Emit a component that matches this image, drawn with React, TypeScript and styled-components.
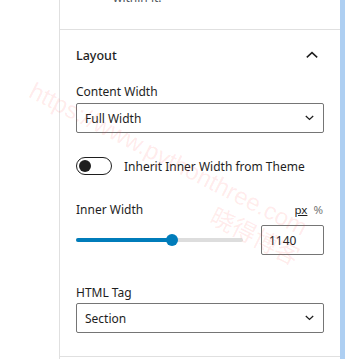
import React from "react";
import styled, { createGlobalStyle } from "styled-components";

const Global = createGlobalStyle`
  html, body { margin: 0; padding: 0; background: #fff; }
  body { font-family: "Noto Sans", "Liberation Sans", sans-serif; color: #1e1e1e; }
  * { box-sizing: border-box; }
`;

const Page = styled.div`
  position: relative;
  display: flex;
  width: 345px;
  height: 359px;
  overflow: hidden;
  background: #fff;
`;

const Gutter = styled.div`
  width: 59px;
  flex: none;
`;

const Panel = styled.div`
  width: 281px;
  flex: none;
  border-left: 1px solid #e0e0e0;
  display: flex;
  flex-direction: column;
`;

const Scroll = styled.div`
  width: 5px;
  flex: none;
  background: #aecff2;
`;

const TopSection = styled.div`
  height: 30px;
  border-bottom: 1px solid #e0e0e0;
  overflow: hidden;
  padding-left: 53px;
`;

const TopText = styled.div`
  font-size: 12px;
  line-height: 16px;
  margin-top: -10px;
  color: #50575e;
`;

const Section = styled.div`
  padding: 0 16px 23px 16px;
  border-bottom: 1px solid #e0e0e0;
  display: flex;
  flex-direction: column;
`;

const Header = styled.div`
  height: 50px;
  display: flex;
  align-items: center;
  justify-content: space-between;
  font-size: 12.5px;
  font-weight: 500;
`;

const Label = styled.div<{ $top: number; $bottom: number }>`
  font-size: 12px;
  line-height: 16px;
  margin-top: ${(p) => p.$top}px;
  margin-bottom: ${(p) => p.$bottom}px;
`;

const SelectBox = styled.div`
  height: 30px;
  border: 1px solid #757575;
  border-radius: 2px;
  display: flex;
  align-items: center;
  justify-content: space-between;
  padding: 0 9px 0 8px;
  font-size: 12px;
`;

const ToggleRow = styled.div`
  margin-top: 24px;
  display: flex;
  align-items: center;
  gap: 12px;
  height: 18px;
  font-size: 12px;
`;

const Toggle = styled.div`
  width: 36px;
  height: 18px;
  border: 1.5px solid #1e1e1e;
  border-radius: 9px;
  display: flex;
  align-items: center;
  padding-left: 2px;
`;

const Knob = styled.div`
  width: 12px;
  height: 12px;
  border-radius: 50%;
  background: #1e1e1e;
`;

const LabelRow = styled.div`
  margin-top: 26px;
  display: flex;
  justify-content: space-between;
  align-items: center;
  height: 16px;
  font-size: 12px;
`;

const Units = styled.div`
  display: flex;
  gap: 6px;
  font-size: 11.5px;
  padding-right: 1px;
`;

const Unit = styled.span<{ $active?: boolean }>`
  color: ${(p) => (p.$active ? "#1e1e1e" : "#757575")};
  text-decoration: ${(p) => (p.$active ? "underline" : "none")};
`;

const RangeRow = styled.div`
  margin-top: 8px;
  display: flex;
  align-items: center;
  gap: 18px;
`;

const Track = styled.div`
  position: relative;
  width: 167px;
  height: 4px;
  border-radius: 2px;
  background: #dddddd;
`;

const Fill = styled.div`
  height: 4px;
  border-radius: 2px;
  background: #007cba;
`;

const Thumb = styled.div`
  position: absolute;
  top: -4px;
  width: 12px;
  height: 12px;
  margin-left: -6px;
  border-radius: 50%;
  background: #007cba;
`;

const NumberBox = styled.div`
  width: 63px;
  height: 30px;
  border: 1px solid #757575;
  border-radius: 2px;
  display: flex;
  align-items: center;
  padding-left: 7px;
  font-size: 12px;
`;

const Watermark = styled.div`
  position: absolute;
  left: 38px;
  top: 76px;
  transform-origin: 0 0;
  transform: rotate(27deg);
  color: rgba(255, 60, 60, 0.1);
  font-family: "Liberation Sans", "Noto Sans CJK SC", sans-serif;
  font-size: 24px;
  line-height: 30px;
  pointer-events: none;
  white-space: nowrap;
`;

const WatermarkCn = styled.div`
  padding-left: 218px;
  font-size: 24px;
`;

const HeaderChevron = styled.svg`
  margin-right: 6px;
`;

const HeaderIcon = () => (
  <HeaderChevron width="12" height="8" viewBox="0 0 12 8">
    <path d="M0.8 6.4 L6 1.6 L11.2 6.4" fill="none" stroke="#1e1e1e" strokeWidth="1.5" />
  </HeaderChevron>
);

const SmallChevron = () => (
  <svg width="9" height="6" viewBox="0 0 9 6">
    <path d="M0.8 1 L4.5 4.4 L8.2 1" fill="none" stroke="#1e1e1e" strokeWidth="1.3" />
  </svg>
);

export default function App() {
  const pct = 96 / 167;
  return (
    <Page>
      <Global />
      <Gutter />
      <Panel>
        <TopSection>
          <TopText>within it.</TopText>
        </TopSection>
        <Section>
          <Header>
            <span>Layout</span>
            <HeaderIcon />
          </Header>
          <Label $top={4} $bottom={3}>Content Width</Label>
          <SelectBox>
            <span>Full Width</span>
            <SmallChevron />
          </SelectBox>
          <ToggleRow>
            <Toggle>
              <Knob />
            </Toggle>
            <span>Inherit Inner Width from Theme</span>
          </ToggleRow>
          <LabelRow>
            <span>Inner Width</span>
            <Units>
              <Unit $active>px</Unit>
              <Unit>%</Unit>
            </Units>
          </LabelRow>
          <RangeRow>
            <Track>
              <Fill style={{ width: `${pct * 100}%` }} />
              <Thumb style={{ left: `${pct * 100}%` }} />
            </Track>
            <NumberBox>1140</NumberBox>
          </RangeRow>
          <Label $top={30} $bottom={2}>HTML Tag</Label>
          <SelectBox>
            <span>Section</span>
            <SmallChevron />
          </SelectBox>
        </Section>
      </Panel>
      <Scroll />
      <Watermark>
        <div>https://www.pythonthree.com</div>
        <WatermarkCn>晓得博客</WatermarkCn>
      </Watermark>
    </Page>
  );
}
